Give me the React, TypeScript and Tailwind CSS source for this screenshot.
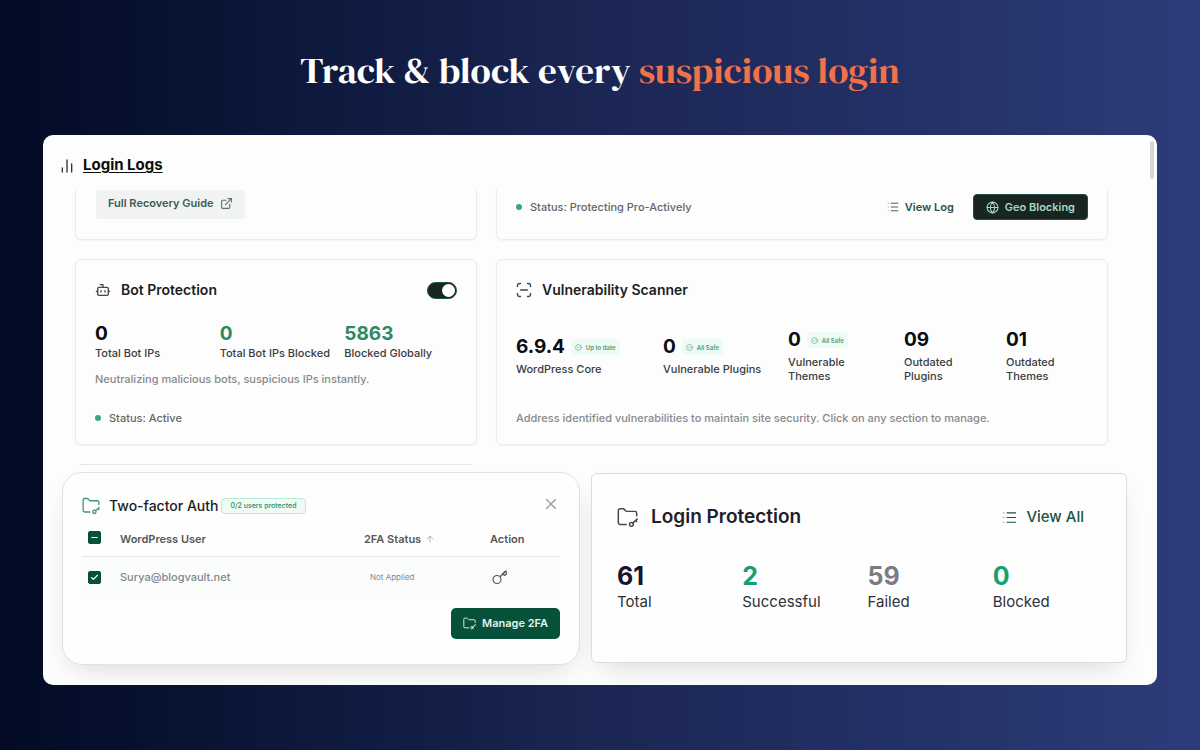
/**
 * Login security showcase: a headline above a dashboard window with the
 * protection cards, the 2FA panel and the login statistics.
 */

import { useState } from 'react';
import type { ReactNode } from 'react';
import {
  ArrowUp,
  Bot,
  Check,
  ChartNoAxesColumn,
  CircleCheck,
  ExternalLink,
  Globe,
  Minus,
  X,
} from 'lucide-react';

const BOT_STATS = [
  { value: '0', label: 'Total Bot IPs', color: 'text-[#0b0b12]' },
  { value: '0', label: 'Total Bot IPs Blocked', color: 'text-[#2b8a62]' },
  { value: '5863', label: 'Blocked Globally', color: 'text-[#2b8a62]' },
];

const SCANNER_STATS = [
  { value: '6.9.4', label: 'WordPress Core', badge: 'Up to date', narrow: false },
  { value: '0', label: 'Vulnerable Plugins', badge: 'All Safe', narrow: false },
  { value: '0', label: 'Vulnerable Themes', badge: 'All Safe', narrow: true },
  { value: '09', label: 'Outdated Plugins', badge: '', narrow: true },
  { value: '01', label: 'Outdated Themes', badge: '', narrow: true },
];

const LOGIN_STATS = [
  { value: '61', label: 'Total', color: 'text-[#14142b]' },
  { value: '2', label: 'Successful', color: 'text-[#17a06f]' },
  { value: '59', label: 'Failed', color: 'text-[#7b7b80]' },
  { value: '0', label: 'Blocked', color: 'text-[#17a06f]' },
];

export default function App() {
  return (
    <main className="min-h-screen bg-linear-to-r from-[#030b25] via-[#1b2654] via-50% to-[#2d3c79] px-[43px] pt-11 pb-16 font-['Inter',sans-serif]">
      <h1 className="text-center font-['DM_Serif_Display','Liberation_Serif',serif] text-[37px] leading-[52px] font-normal text-white">
        Track &amp; block every <span className="text-[#f0714a]">suspicious login</span>
      </h1>

      <section className="relative mt-[39px] overflow-hidden rounded-[10px] bg-[#fdfdfd] pb-5">
        <div className="absolute top-[6px] right-[3px] h-[38px] w-1 rounded-full bg-[#d5d6da]" />

        <header className="flex h-[55px] items-center gap-2 pt-[6px] pl-4">
          <ChartNoAxesColumn className="h-4 w-4 text-[#333]" strokeWidth={2} />
          <h2 className="text-[15px] font-bold text-[#0c0c0c] underline underline-offset-2">Login Logs</h2>
        </header>

        <div className="grid grid-cols-[402fr_612fr] gap-x-[19px] pr-[49px] pl-8">
          <RecoveryCard />
          <FirewallCard />
        </div>

        <div className="mt-[19px] grid grid-cols-[402fr_612fr] gap-x-[19px] pr-[49px] pl-8">
          <BotCard />
          <ScannerCard />
          <hr className="mx-1 mt-[19px] border-[#e4e5e6]" />
        </div>

        <div className="mt-[7px] grid grid-cols-[518fr_536fr] gap-x-[11px] pr-[30px] pl-[19px]">
          <TwoFactorCard />
          <LoginProtectionCard />
        </div>
      </section>
    </main>
  );
}

function RecoveryCard() {
  return (
    <div className="h-[50px] rounded-b-md border border-t-0 border-[#ececee] pl-[20px] shadow-xs">
      <button className="flex h-[29px] items-center gap-[6px] rounded-b-xs bg-[#f1f2f2] px-3 pb-[2px] text-[11px] font-semibold text-[#3d5c53]">
        Full Recovery Guide
        <ExternalLink className="h-[13px] w-[13px] text-[#5b6d67]" />
      </button>
    </div>
  );
}

function FirewallCard() {
  return (
    <div className="flex h-[50px] items-start rounded-b-md border border-t-0 border-[#ececee] px-[19px] pt-1 shadow-xs">
      <div className="pt-[5px]">
        <Status>Status: Protecting Pro-Actively</Status>
      </div>
      <a href="#log" className="mr-[19px] ml-auto flex h-[26px] items-center gap-[6px] text-[11px] font-semibold text-[#2a5347]">
        <ListIcon className="h-3 w-3" />
        View Log
      </a>
      <button className="flex h-[26px] items-center gap-[6px] rounded-[4px] border border-[#1b4d40] bg-[#182523] px-3 text-[11px] font-semibold text-[#a5d8c5]">
        <Globe className="h-[13px] w-[13px]" />
        Geo Blocking
      </button>
    </div>
  );
}

function BotCard() {
  const [enabled, setEnabled] = useState(true);

  return (
    <div className="rounded-md border border-[#ececee] px-[19px] pt-[18px] pb-[18px] shadow-xs">
      <div className="flex h-6 items-center gap-[10px]">
        <Bot className="h-4 w-4 text-[#44484a]" />
        <h3 className="text-sm font-semibold text-[#1b1d1f]">Bot Protection</h3>
        <button
          role="switch"
          aria-checked={enabled}
          aria-label="Bot Protection"
          onClick={() => setEnabled(!enabled)}
          className={`ml-auto flex h-[17px] w-[30px] items-center rounded-full border border-[#1d5243] bg-[#182523] px-px ${enabled ? 'justify-end' : 'justify-start'}`}
        >
          <span className="h-[13px] w-[13px] rounded-full bg-white" />
        </button>
      </div>

      <div className="mt-5 grid grid-cols-3 gap-x-3">
        {BOT_STATS.map((s) => (
          <div key={s.label}>
            <div className={`text-[19px] leading-[23px] font-bold ${s.color}`}>{s.value}</div>
            <div className="text-[11px] leading-4 font-medium whitespace-nowrap text-[#3a3c3f]">{s.label}</div>
          </div>
        ))}
      </div>

      <p className="mt-[10px] text-[11px] leading-4 font-medium text-[#88898c]">
        Neutralizing malicious bots, suspicious IPs instantly.
      </p>
      <div className="mt-[23px]">
        <Status>Status: Active</Status>
      </div>
    </div>
  );
}

function ScannerCard() {
  return (
    <div className="rounded-md border border-[#ececee] px-[19px] pt-[18px] shadow-xs">
      <div className="flex h-6 items-center gap-[10px]">
        <ScanIcon />
        <h3 className="text-sm font-semibold text-[#1b1d1f]">Vulnerability Scanner</h3>
      </div>

      <div className="mt-6 grid grid-cols-[147fr_125fr_116fr_102fr_82fr] items-center">
        {SCANNER_STATS.map((s) => (
          <div key={s.label}>
            <div className="flex h-[26px] items-center gap-[6px] pt-[2px] text-[19px] font-bold text-[#0b0b12]">
              {s.value}
              {s.badge && (
                <span className="flex h-4 items-center gap-1 rounded-[4px] bg-[#eefbf5] px-1 text-[6px] font-semibold text-[#4a9a7c]">
                  <CircleCheck className="h-[7px] w-[7px]" />
                  {s.badge}
                </span>
              )}
            </div>
            <div className={`mt-[3px] text-[11px] leading-[14px] font-medium text-[#3a3c3f] ${s.narrow ? 'w-16' : ''}`}>
              {s.label}
            </div>
          </div>
        ))}
      </div>

      <p className="mt-[27px] text-[11px] leading-4 font-medium text-[#88898c]">
        Address identified vulnerabilities to maintain site security. Click on any section to manage.
      </p>
    </div>
  );
}

function TwoFactorCard() {
  return (
    <div className="rounded-[20px] border border-[#dfe1e2] bg-[#fefefe] px-[19px] pt-[21px] pb-[25px] shadow-[0_12px_28px_-10px_rgba(0,0,0,0.16)]">
      <div className="flex h-6 items-center">
        <FolderKeyIcon className="h-[18px] w-[18px] text-[#3d9475]" />
        <h3 className="ml-[9px] text-sm font-medium text-[#1b1d1f]">Two-factor Auth</h3>
        <span className="ml-[3px] flex h-4 items-center rounded-[4px] border border-[#b9ecd5] bg-[#effcf6] px-2 text-[7px] font-medium text-[#2c8a66]">
          0/2 users protected
        </span>
        <button aria-label="Close" className="mb-1 ml-auto text-[#919497]">
          <X className="h-[18px] w-[18px]" strokeWidth={1.5} />
        </button>
      </div>

      <table className="w-full text-left text-[11px]">
        <thead>
          <tr className="h-[38px] border-b border-[#e3e6e7] text-[#55575a]">
            <th className="w-[38px] pt-[2px] pl-[6px]">
              <Tick label="Select all users" partial />
            </th>
            <th className="pt-1 font-semibold">WordPress User</th>
            <th className="w-[126px] pt-1 font-semibold">
              <span className="flex items-center gap-1">
                2FA Status <ArrowUp className="h-[10px] w-[10px] text-[#a5a8aa]" />
              </span>
            </th>
            <th className="w-[70px] pt-1 font-semibold">Action</th>
          </tr>
        </thead>
        <tbody>
          <tr className="h-[42px] bg-[#fafdfc] text-[#85878a]">
            <td className="pl-[6px]">
              <Tick label="Select Surya@blogvault.net" />
            </td>
            <td className="font-medium">Surya@blogvault.net</td>
            <td className="pl-[6px] text-[8px]">Not Applied</td>
            <td>
              <button aria-label="Manage key" className="flex items-center text-[#55575a]">
                <KeyIcon />
              </button>
            </td>
          </tr>
        </tbody>
      </table>

      <button className="mt-[10px] ml-auto flex h-[31px] items-center gap-[6px] rounded-[5px] bg-[#07513b] px-3 text-[11px] font-semibold text-[#e3f3ec]">
        <FolderKeyIcon className="h-[13px] w-[13px]" />
        Manage 2FA
      </button>
    </div>
  );
}

function LoginProtectionCard() {
  return (
    <div className="mt-px mb-[2px] rounded-md border border-[#dadcde] bg-[#fefefe] pt-[31px] pl-[25px] shadow-[0_12px_28px_-10px_rgba(0,0,0,0.16)]">
      <div className="flex h-6 items-center pr-[42px]">
        <FolderKeyIcon className="h-[21px] w-[21px] text-[#44484a]" />
        <h3 className="ml-[13px] text-[19px] font-semibold text-[#1f202c]">Login Protection</h3>
        <a href="#all" className="ml-auto flex items-center gap-[9px] text-[15px] font-medium text-[#1f5140]">
          <ListIcon className="h-[15px] w-[15px]" />
          View All
        </a>
      </div>

      <div className="mt-[31px] grid grid-cols-4 pr-2">
        {LOGIN_STATS.map((s) => (
          <div key={s.label}>
            <div className={`text-[25px] leading-8 font-bold ${s.color}`}>{s.value}</div>
            <div className="text-[15px] leading-5 text-[#2e3033]">{s.label}</div>
          </div>
        ))}
      </div>
    </div>
  );
}

function Status({ children }: { children: ReactNode }) {
  return (
    <div className="flex h-4 items-center text-[11px] font-medium text-[#636668]">
      <span className="mr-2 h-[6px] w-[6px] rounded-full bg-[#2fab7e]" />
      {children}
    </div>
  );
}

function Tick({ label, partial = false }: { label: string; partial?: boolean }) {
  const [checked, setChecked] = useState(!partial);
  const Mark = partial ? Minus : Check;

  return (
    <label className="grid h-[13px] w-[13px]">
      <input
        type="checkbox"
        aria-label={label}
        checked={checked}
        onChange={(e) => setChecked(e.target.checked)}
        ref={(el) => {
          if (el) el.indeterminate = partial && !checked;
        }}
        className="col-start-1 row-start-1 h-[13px] w-[13px] appearance-none rounded-xs border border-[#07513b] bg-white checked:bg-[#07513b] indeterminate:bg-[#07513b]"
      />
      <Mark className="pointer-events-none col-start-1 row-start-1 m-[2px] h-[9px] w-[9px] text-white" strokeWidth={3} />
    </label>
  );
}

function ListIcon({ className }: { className: string }) {
  return (
    <svg viewBox="0 0 16 16" fill="none" stroke="currentColor" className={className} aria-hidden="true">
      <path d="M5 3h10M5 8h10M5 13h10" strokeWidth="1.2" />
      <path d="M1 3h1.5M1 8h1.5M1 13h1.5" strokeWidth="1.2" opacity="0.5" />
    </svg>
  );
}

function ScanIcon() {
  return (
    <svg viewBox="0 0 16 16" fill="none" stroke="#44484a" strokeWidth="1.4" strokeLinecap="round" className="h-4 w-4" aria-hidden="true">
      <path d="M1.5 4.5v-1a2 2 0 0 1 2-2h1M11.5 1.5h1a2 2 0 0 1 2 2v1M14.5 11.5v1a2 2 0 0 1-2 2h-1M4.5 14.5h-1a2 2 0 0 1-2-2v-1M4.5 8h7" />
    </svg>
  );
}

function FolderKeyIcon({ className }: { className: string }) {
  return (
    <svg viewBox="0 0 24 24" fill="none" stroke="currentColor" strokeWidth="1.7" strokeLinecap="round" strokeLinejoin="round" className={className} aria-hidden="true">
      <path d="M10.5 20h-7a2 2 0 0 1-2-2V4a2 2 0 0 1 2-2H7a2 2 0 0 1 1.6.8l1.1 1.4a2 2 0 0 0 1.6.8h9.2a2 2 0 0 1 2 2v3" />
      <circle cx="16.5" cy="19.8" r="2.2" />
      <path d="m18.2 18.1 4.8-4.3M21.3 15.3l1.2 1.4" />
    </svg>
  );
}

function KeyIcon() {
  return (
    <svg viewBox="0 0 16 16" fill="none" stroke="currentColor" strokeWidth="1.2" strokeLinecap="round" strokeLinejoin="round" className="ml-[2px] h-4 w-4" aria-hidden="true">
      <circle cx="5" cy="10.5" r="4" />
      <path d="m8 7.7 6-5.7M14 2l.5 3-2 1.5-2-1.9M11 4.5l1.2-1.5L14 2" />
    </svg>
  );
}
